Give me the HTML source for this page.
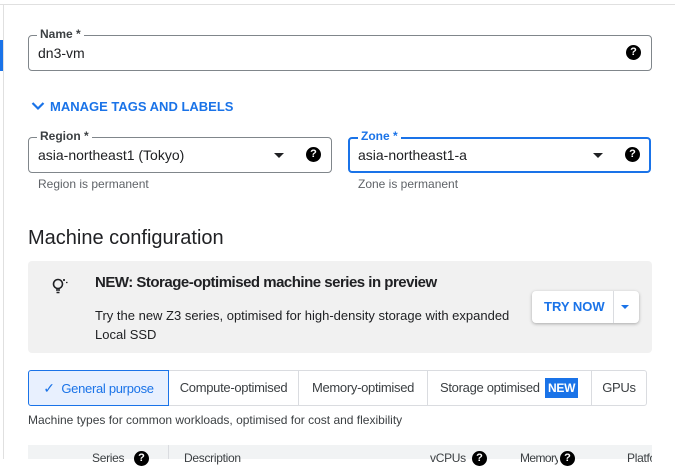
<!DOCTYPE html>
<html><head><meta charset="utf-8"><style>
*{box-sizing:border-box;margin:0;padding:0}
body{width:675px;height:459px;overflow:hidden;background:#fff;font-family:"Liberation Sans",sans-serif;color:#202124;position:relative}
.a{position:absolute}
.fld{position:absolute;border:1px solid #80868b;border-radius:4px}
.lbl{position:absolute;top:-9px;left:8px;background:#fff;padding:0 3px;font-size:12px;color:#3c4043;font-weight:bold}
.val{position:absolute;left:0;top:9px;font-size:14px;color:#202124;left:-1px}
.q{position:absolute;width:15px;height:15px;border-radius:50%;background:#000;color:#fff;font-size:11px;font-weight:bold;text-align:center;line-height:15px}
.tri{position:absolute;width:0;height:0;border-left:5px solid transparent;border-right:5px solid transparent;border-top:5px solid #202124}
.help{position:absolute;font-size:12px;color:#5f6368}
.tab{position:absolute;top:370px;height:36px;border:1px solid #dadce0;font-size:13px;color:#3c4043;line-height:34px;text-align:center;letter-spacing:-0.3px}
.th{font-size:12px;color:#3c4043;position:absolute;top:451px;letter-spacing:-0.3px}
</style></head><body>
<div class="a" style="left:0;top:4px;width:675px;height:1px;background:#e0e0e0"></div>
<div class="a" style="left:3px;top:4px;width:1px;height:455px;background:#e0e0e0"></div>
<div class="a" style="left:0;top:40px;width:3px;height:31px;background:#1a73e8"></div>

<div class="fld" style="left:28px;top:35px;width:624px;height:36px">
<div class="lbl">Name *</div>
<div class="val" style="left:9px">dn3-vm</div>
<div class="q" style="left:597px;top:9px">?</div>
</div>

<svg class="a" style="left:31px;top:101px" width="14" height="10"><path d="M1.5 2 L7 7.5 L12.5 2" stroke="#1a73e8" stroke-width="2.2" fill="none"/></svg>
<div class="a" style="left:50px;top:99px;font-size:13px;font-weight:bold;color:#1a73e8">MANAGE TAGS AND LABELS</div>

<div class="fld" style="left:28px;top:137px;width:304px;height:36px">
<div class="lbl">Region *</div>
<div class="val" style="left:9px">asia-northeast1 (Tokyo)</div>
<div class="tri" style="left:245px;top:15px"></div>
<div class="q" style="left:277px;top:9px">?</div>
</div>
<div class="help" style="left:38px;top:177px">Region is permanent</div>

<div class="fld" style="left:348px;top:137px;width:303px;height:36px;border:2px solid #1a73e8">
<div class="lbl" style="color:#1a73e8;top:-10px">Zone *</div>
<div class="val" style="left:8px;top:8px">asia-northeast1-a</div>
<div class="tri" style="left:243px;top:14px"></div>
<div class="q" style="left:275px;top:8px">?</div>
</div>
<div class="help" style="left:358px;top:177px">Zone is permanent</div>

<div class="a" style="left:28px;top:227px;font-size:20px;color:#202124">Machine configuration</div>

<div class="a" style="left:28px;top:261px;width:624px;height:92px;background:#f1f1f1;border-radius:4px"></div>
<svg class="a" style="left:50px;top:276px" width="20" height="20" viewBox="0 0 20 20"><circle cx="8" cy="8" r="4.5" stroke="#202124" stroke-width="1.6" fill="none"/><path d="M6 14h4M6.5 16.5h3" stroke="#202124" stroke-width="1.5"/><path d="M14 3l0 2M13 4h2M16 6.5h1.5" stroke="#202124" stroke-width="1.2"/></svg>
<div class="a" style="left:95px;top:274px;font-size:15px;font-weight:bold;color:#202124;letter-spacing:-0.5px">NEW: Storage-optimised machine series in preview</div>
<div class="a" style="left:95px;top:306px;font-size:13px;line-height:19px;color:#202124;letter-spacing:0px">Try the new Z3 series, optimised for high-density storage with expanded<br>Local SSD</div>
<div class="a" style="left:532px;top:291px;width:107px;height:32px;background:#fff;border-radius:4px;box-shadow:0 1px 3px rgba(0,0,0,.3)">
<div class="a" style="left:12px;top:8px;font-size:13px;font-weight:bold;color:#1a73e8">TRY NOW</div>
<div class="a" style="left:81px;top:0;width:1px;height:32px;background:#dadce0"></div>
<div class="tri" style="left:89px;top:14px;border-left-width:4px;border-right-width:4px;border-top:4px solid #1a73e8"></div>
</div>

<div class="tab" style="left:28px;width:141px;background:#e8f0fe;border-color:#1a73e8;color:#1a73e8;z-index:2;border-radius:3px 0 0 3px"><span style="font-size:14px">✓</span>&nbsp; General purpose</div>
<div class="tab" style="left:168px;width:131px">Compute-optimised</div>
<div class="tab" style="left:298px;width:130px">Memory-optimised</div>
<div class="tab" style="left:427px;width:165px;text-align:left;padding-left:12px">Storage optimised <span style="display:inline-block;background:#1a73e8;color:#fff;font-weight:bold;padding:0 3px;line-height:20px;margin-left:2px;font-size:12px">NEW</span></div>
<div class="tab" style="left:591px;width:56px;border-radius:0 3px 3px 0">GPUs</div>

<div class="help" style="left:28px;top:413px;color:#3c4043">Machine types for common workloads, optimised for cost and flexibility</div>

<div class="a" style="left:28px;top:445px;width:624px;height:14px;background:#f1f3f4"></div>
<div class="a" style="left:168px;top:445px;width:1px;height:14px;background:#dadce0"></div>
<div class="th" style="left:92px">Series</div><div class="q" style="left:134px;top:451px">?</div>
<div class="th" style="left:184px">Description</div>
<div class="th" style="left:430px">vCPUs</div><div class="q" style="left:472px;top:451px">?</div>
<div class="th" style="left:520px;letter-spacing:-0.6px;width:38px;white-space:nowrap;overflow:hidden">Memory</div><div class="q" style="left:560px;top:451px">?</div>
<div class="th" style="left:627px;width:25px;overflow:hidden">Platform</div>
</body></html>
